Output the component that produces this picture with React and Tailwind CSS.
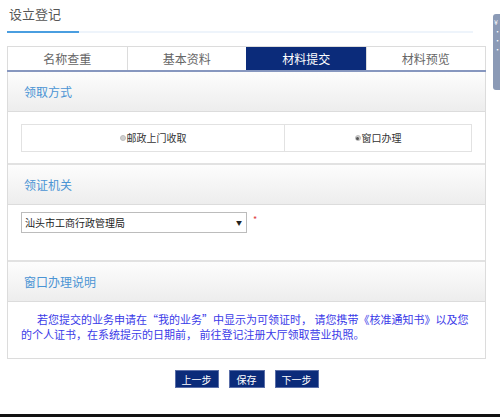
import React from 'react';

const font = { fontFamily: '"Noto Sans CJK SC", "Noto Sans", sans-serif' };

const tabs = ['名称查重', '基本资料', '材料提交', '材料预览'];

const SectionHeader = ({ title }) => (
  <div className="h-[40px] flex items-center pl-[16px] text-[12px] text-[#4a94d4] bg-gradient-to-b from-[#fdfdfd] to-[#ededed] border-b border-[#dcdcdc]">
    {title}
  </div>
);

const Radio = ({ checked, label }) => (
  <label className="flex items-center text-[10px] text-[#333] leading-none">
    <span className="w-[6px] h-[6px] rounded-full bg-[#cfcfcf] border border-[#bdbdbd] flex items-center justify-center">
      {checked && <span className="w-[3px] h-[3px] rounded-full bg-[#555]" />}
    </span>
    <span className="ml-[1px]">{label}</span>
  </label>
);

export default function App() {
  return (
    <div className="relative w-[500px] h-[417px] bg-white overflow-hidden" style={font}>
      <div className="pl-[7px] w-[486px]">
        {/* title */}
        <div className="h-[31px] pt-[6px] pl-[2px] text-[13px] leading-[16px] text-[#555]">设立登记</div>
        <div className="flex h-[2px] mr-[13px]">
          <div className="w-[72px] bg-[#4a9ee0]" />
          <div className="flex-1 bg-[#eef4fb]" />
        </div>

        {/* tabs */}
        <div className="mt-[13px] flex h-[26px] border-t border-[#dcdcdc] border-b-2 border-b-[#8797bf]">
          {tabs.map((t, i) => (
            <div
              key={t}
              className={`flex-1 flex items-center justify-center text-[12px] border-l border-[#dcdcdc] ${
                i === 3 ? 'border-r' : ''
              } ${i === 2 ? 'bg-[#0b2b7a] text-white border-l-[#0b2b7a]' : 'bg-white text-[#666]'}`}
            >
              {t}
            </div>
          ))}
        </div>

        {/* panel */}
        <div className="border-x border-b border-[#dcdcdc]">
          <SectionHeader title="领取方式" />
          <div className="h-[53px] border-b-2 border-[#e2e2e2] pt-[12px] px-[13px]">
            <div className="flex h-[28px] border border-[#e2e2e2]">
              <div className="w-[263px] flex items-center justify-center border-r border-[#e2e2e2]">
                <Radio label="邮政上门收取" />
              </div>
              <div className="flex-1 flex items-center justify-center">
                <Radio checked label="窗口办理" />
              </div>
            </div>
          </div>

          <SectionHeader title="领证机关" />
          <div className="h-[57px] border-b-2 border-[#e2e2e2] pt-[7px] px-[13px] flex items-start">
            <div className="w-[226px] h-[21px] border border-[#bcbcbc] flex items-center justify-between pl-[3px] pr-[4px] text-[10px] text-[#222]">
              <span>汕头市工商行政管理局</span>
              <span className="text-[6px]">▼</span>
            </div>
            <span className="ml-[6px] mt-[1px] text-[9px] text-[#e04040]">*</span>
          </div>

          <SectionHeader title="窗口办理说明" />
          <div className="h-[56px] px-[13px] pt-[10px] text-[11px] leading-[15px] text-[#3a3ae8]">
            <p className="indent-[16px]">
              若您提交的业务申请在“我的业务”中显示为可领证时， 请您携带《核准通知书》以及您的个人证书，在系统提示的日期前， 前往登记注册大厅领取营业执照。
            </p>
          </div>
        </div>

        {/* buttons */}
        <div className="mt-[11px] flex justify-center gap-[10px]">
          <button className="w-[44px] h-[18px] bg-[#0b2b7a] text-white text-[10px] border border-[#5a6ea8]">上一步</button>
          <button className="w-[36px] h-[18px] bg-[#0b2b7a] text-white text-[10px] border border-[#5a6ea8]">保存</button>
          <button className="w-[44px] h-[18px] bg-[#0b2b7a] text-white text-[10px] border border-[#5a6ea8]">下一步</button>
        </div>
      </div>

      {/* side float */}
      <div className="absolute right-0 top-[14px] w-[7px] h-[76px] rounded-l-[3px] bg-[#8b9ab6] overflow-hidden text-white text-[7px] leading-[9px] pl-[1px] pt-[4px]">
        ¥<br />·<br />·<br />·
      </div>

      {/* bottom line */}
      <div className="absolute left-0 bottom-0 w-full h-[3px] bg-[#111]" />
    </div>
  );
}
